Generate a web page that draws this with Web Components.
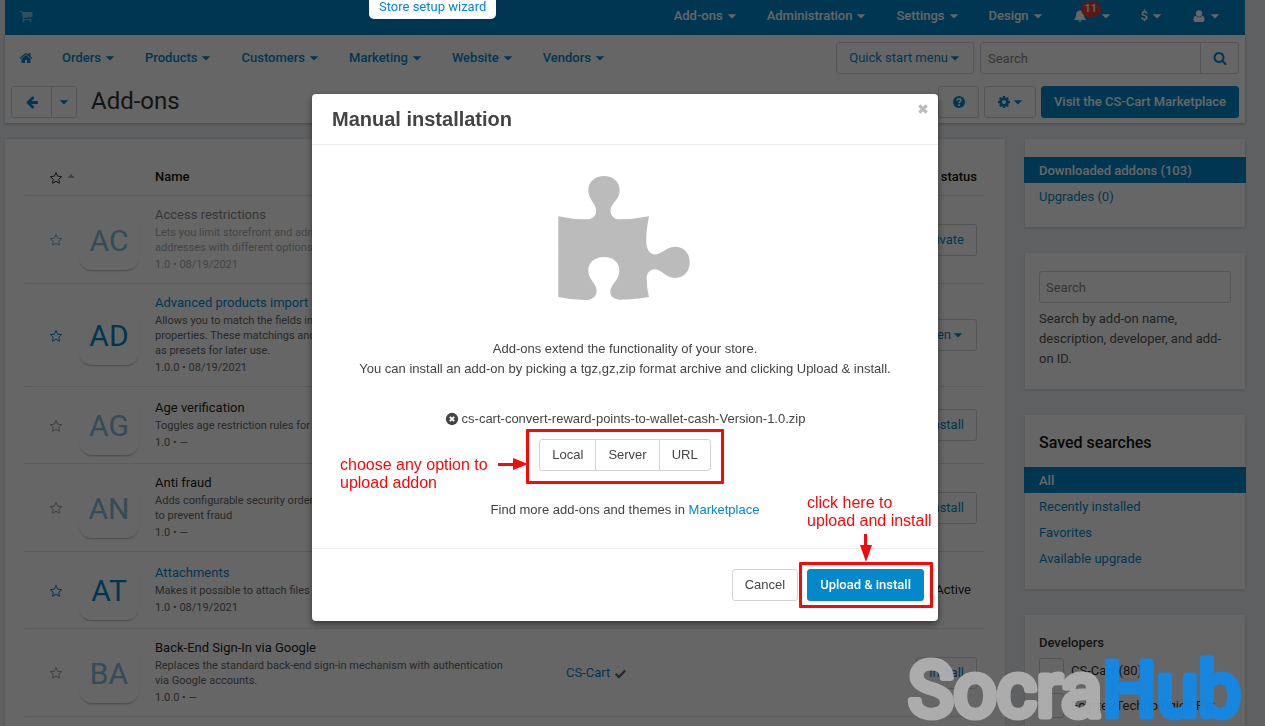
<!DOCTYPE html>
<html lang="en">
<head>
<meta charset="utf-8">
<title>Add-ons</title>
<style>
    :root {
        --primary-color: #0388cc;
        --border-color: #d0d4d6;
        --note-color: #f50a0a;
    }

    body {
        margin: 0;
        height: 100vh;
        overflow: hidden;
        background: #ebf0f3;
        color: #333;
        font: 13px/20px Roboto, sans-serif;
    }
</style>
</head>
<body>
<admin-page></admin-page>
<wizard-tab>Store setup wizard</wizard-tab>
<install-dialog heading="Manual installation"></install-dialog>
<brand-mark></brand-mark>

<script>
/**
 * Small helper: attaches an open shadow root and fills it with a copy of
 * the markup.
 */
function attach(element, html) {
    const template = document.createElement("template");
    template.innerHTML = html;
    element.attachShadow({mode: "open"});
    element.shadowRoot.appendChild(template.content.cloneNode(true));
}

const ICONS = {
    home: '<path d="M1472 992v480q0 26-19 45t-45 19h-384v-384h-256v384h-384q-26 0-45-19t-19-45v-480q0-1 .5-3t.5-3l575-474 575 474q1 2 1 6zm223-69l-62 74q-8 9-21 11h-3q-13 0-21-7l-692-577-692 577q-12 8-24 7-13-2-21-11l-62-74q-8-10-7-23.5t11-21.5l719-599q32-26 76-26t76 26l244 204v-195q0-14 9-23t23-9h192q14 0 23 9t9 23v408l219 182q10 8 11 21.5t-7 23.5z"/>',
    search: '<path d="M1216 832q0-185-131.500-316.500t-316.500-131.500-316.500 131.500-131.500 316.500 131.500 316.500 316.500 131.500 316.500-131.500 131.500-316.500zm512 832q0 52-38 90t-90 38q-54 0-90-38l-343-342q-179 124-399 124-143 0-273.500-55.500t-225-150-150-225-55.500-273.500 55.500-273.500 150-225 225-150 273.500-55.500 273.500 55.500 225 150 150 225 55.500 273.500q0 220-124 399l343 343q37 37 37 90z"/>',
    back: '<path d="M1664 896v128q0 53-32.500 90.500t-84.500 37.500h-704l293 294q38 36 38 90t-38 90l-75 76q-37 37-90 37-52 0-91-37l-651-652q-37-37-37-90 0-52 37-91l651-650q38-38 91-38 52 0 90 38l75 74q38 38 38 91t-38 91l-293 293h704q52 0 84.500 37.500t32.500 90.500z"/>',
    cart: '<path d="M704 1536q0 52-38 90t-90 38-90-38-38-90 38-90 90-38 90 38 38 90zm896 0q0 52-38 90t-90 38-90-38-38-90 38-90 90-38 90 38 38 90zm128-1088v512q0 24-16.500 42.500t-40.500 21.500l-1044 122q13 60 13 70 0 16-24 64h920q26 0 45 19t19 45-19 45-45 19h-1024q-26 0-45-19t-19-45q0-11 8-31.500t16-36 21.500-40 15.500-29.500l-177-823h-204q-26 0-45-19t-19-45 19-45 45-19h256q16 0 28.500 6.500t19.500 15.500 13 24.500 8 26 5.500 29.500 4.500 26h1201q26 0 45 19t19 45z"/>',
    cog: '<path d="M1152 896q0-106-75-181t-181-75-181 75-75 181 75 181 181 75 181-75 75-181zm512-109v222q0 12-8 23t-20 13l-185 28q-19 54-39 91 35 50 107 138 10 12 10 25t-9 23q-27 37-99 108t-94 71q-12 0-26-9l-138-108q-44 23-91 38-16 136-29 186-7 28-36 28h-222q-14 0-24.500-8.500t-11.500-21.500l-28-184q-49-16-90-37l-141 107q-10 9-25 9-14 0-25-11-126-114-165-168-7-10-7-23 0-12 8-23 15-21 51-66.500t54-70.500q-27-50-41-99l-183-27q-13-2-21-12.500t-8-23.500v-222q0-12 8-23t19-13l186-28q14-46 39-92-40-57-107-138-10-12-10-24 0-10 9-23 26-36 98.500-107.500t94.500-71.500q13 0 26 10l138 107q44-23 91-38 16-136 29-186 7-28 36-28h222q14 0 24.500 8.500t11.500 21.500l28 184q49 16 90 37l142-107q9-9 24-9 13 0 25 10 129 119 165 170 7 8 7 22 0 12-8 23-15 21-51 66.500t-54 70.500q26 50 41 98l183 28q13 2 21 12.500t8 23.500z"/>',
    bell: '<path d="M896 128q90 0 100 110 400 90 400 520 0 370 268 560 0 90-110 90H240q-112 0-112-90 268-190 268-560 0-430 400-520 10-110 100-110zM700 1460h392q-20 200-196 200t-196-200z"/>',
    user: '<circle cx="896" cy="560" r="400"/><path d="M480 850q180 200 416 200t416-200q300 60 300 560 0 254-250 254H430q-250 0-250-254 0-500 300-560z"/>',
    help: '<circle cx="896" cy="896" r="768"/><path d="M640 720q20-240 266-240 236 0 236 206 0 110-120 180-110 60-110 160v30" fill="none" stroke="#fff" stroke-width="200"/><path d="M800 1190h220v210H800z" fill="#fff"/>',
    remove: '<circle cx="896" cy="896" r="790"/><path d="M620 620l552 552M1172 620l-552 552" stroke="#fff" stroke-width="250"/>',
    times: '<path d="M420 420l952 952M1372 420l-952 952" stroke="currentColor" stroke-width="400"/>',
    check: '<path d="M240 960l430 420 880-900" fill="none" stroke="currentColor" stroke-width="330"/>',
    star: '<path d="M896 190l215 470 510 60-380 345 105 505-450-255-450 255 105-505-380-345 510-60z" fill="none" stroke="currentColor" stroke-width="125" stroke-linejoin="round"/>',
    down: '<path d="M256 640h1280l-640 640z"/>',
    up: '<path d="M256 1216h1280l-640-640z"/>'
};

/** <ui-icon name="home"> takes its size from the font size. */
class UiIcon extends HTMLElement {
    constructor() {
        super();
        attach(this, `
            <style>
                :host { display: inline-flex; font-size: 14px; }
                svg { width: 1em; height: 1em; fill: currentColor; }
            </style>
            <svg viewBox="0 0 1792 1792" aria-hidden="true">${ICONS[this.getAttribute("name")]}</svg>
        `);
    }
}

/** A menu title with a caret. */
class NavItem extends HTMLElement {
    constructor() {
        super();
        attach(this, `
            <style>
                :host { display: block; font-weight: 500; }
                a { display: flex; align-items: center; gap: 3px; color: inherit; text-decoration: none; }
                .caret { font-size: 12px; }
            </style>
            <a href="#"><slot></slot><ui-icon class="caret" name="down"></ui-icon></a>
        `);
    }
}

/** Bordered button, "primary" and "dark" change its colours. */
class UiButton extends HTMLElement {
    constructor() {
        super();
        attach(this, `
            <style>
                :host { display: inline-flex; }
                button {
                    box-sizing: border-box;
                    display: flex;
                    align-items: center;
                    justify-content: center;
                    gap: 1px;
                    width: 100%;
                    height: 32px;
                    padding: 0 12px;
                    border: 1px solid var(--border-color);
                    border-radius: 3px;
                    background: #fff;
                    color: var(--primary-color);
                    font: inherit;
                    white-space: nowrap;
                }
                :host([dark]) button { color: #444; }
                :host([primary]) button {
                    border-color: var(--primary-color);
                    background: var(--primary-color);
                    color: #fff;
                    font-family: Roboto, sans-serif;
                    font-weight: 500;
                }
                :host([joined]) button { border-radius: 0; }
                :host([joined="first"]) button { border-radius: 3px 0 0 3px; }
                :host([joined="last"]) button { border-radius: 0 3px 3px 0; }
            </style>
            <button type="button"><slot></slot></button>
        `);
    }
}

class TopBar extends HTMLElement {
    constructor() {
        super();
        attach(this, `
            <style>
                :host {
                    display: flex;
                    align-items: center;
                    justify-content: space-between;
                    height: 35px;
                    padding: 0 24px 4px 14px;
                    box-sizing: border-box;
                    background: var(--primary-color);
                    color: #fff;
                }
                nav { display: flex; align-items: center; gap: 29px; }
                .cart { opacity: .5; }
                .bell { position: relative; display: flex; margin-right: 10px; }
                .badge {
                    position: absolute;
                    left: 8px;
                    top: -8px;
                    padding: 0 4px;
                    border-radius: 8px;
                    background: #e0403c;
                    font-size: 11px;
                    line-height: 16px;
                }
            </style>
            <ui-icon class="cart" name="cart"></ui-icon>
            <nav>
                <nav-item>Add-ons</nav-item>
                <nav-item>Administration</nav-item>
                <nav-item>Settings</nav-item>
                <nav-item>Design</nav-item>
                <nav-item><span class="bell"><ui-icon name="bell"></ui-icon><span class="badge">11</span></span></nav-item>
                <nav-item>$</nav-item>
                <nav-item><ui-icon name="user"></ui-icon></nav-item>
            </nav>
        `);
    }
}

class MainMenu extends HTMLElement {
    constructor() {
        super();
        attach(this, `
            <style>
                :host {
                    display: grid;
                    gap: 12px;
                    padding: 7px 6px 5px;
                    background: #fff;
                    box-shadow: 0 1px 3px rgba(0, 0, 0, .25);
                }
                .row, nav, .left, .right, .search { display: flex; align-items: center; }
                .row { justify-content: space-between; height: 32px; }
                nav { gap: 29px; padding-left: 8px; color: var(--primary-color); }
                .home { display: flex; color: inherit; }
                .right { gap: 6px; }
                .tools { gap: 5px; }
                .left { align-items: flex-start; }
                h1 { margin: 0 0 0 14px; font-size: 24px; font-weight: 400; line-height: 30px; }
                .back { width: 41px; }
                .back-menu { width: 26px; margin-left: -1px; }
                .back-menu ui-icon, .caret { font-size: 12px; }
                .search input {
                    box-sizing: border-box;
                    width: 221px;
                    height: 32px;
                    padding: 0 7px;
                    border: 1px solid var(--border-color);
                    border-radius: 3px 0 0 3px;
                    font: inherit;
                }
                .search ui-button { width: 39px; margin-left: -1px; }
                input::placeholder { color: #888; }
                .visit { width: 198px; }
                .help { width: 41px; }
                .gear { width: 52px; }
            </style>
            <div class="row">
                <nav>
                    <a class="home" href="#" aria-label="Home"><ui-icon name="home"></ui-icon></a>
                    <nav-item>Orders</nav-item>
                    <nav-item>Products</nav-item>
                    <nav-item>Customers</nav-item>
                    <nav-item>Marketing</nav-item>
                    <nav-item>Website</nav-item>
                    <nav-item>Vendors</nav-item>
                </nav>
                <div class="right">
                    <ui-button>Quick start menu<ui-icon class="caret" name="down"></ui-icon></ui-button>
                    <div class="search">
                        <input type="text" placeholder="Search" aria-label="Search">
                        <ui-button joined="last"><ui-icon name="search"></ui-icon></ui-button>
                    </div>
                </div>
            </div>
            <div class="row">
                <div class="left">
                    <ui-button class="back" joined="first"><ui-icon name="back"></ui-icon></ui-button>
                    <ui-button class="back-menu" joined="last"><ui-icon name="down"></ui-icon></ui-button>
                    <h1>Add-ons</h1>
                </div>
                <div class="right tools">
                    <ui-button class="help"><ui-icon name="help"></ui-icon></ui-button>
                    <ui-button class="gear"><ui-icon name="cog"></ui-icon><ui-icon class="caret" name="down"></ui-icon></ui-button>
                    <ui-button class="visit" primary>Visit the CS-Cart Marketplace</ui-button>
                </div>
            </div>
        `);
    }
}

const ADDONS = [
    {code: "AC", name: "Access restrictions", text: "Lets you limit storefront and admin area access to\naddresses with different options", meta: "1.0 • 08/19/2021", state: "disabled", action: "Activate"},
    {code: "AD", name: "Advanced products import", text: "Allows you to match the fields in the file with product\nproperties. These matchings and settings can be saved\nas presets for later use.", meta: "1.0.0 • 08/19/2021", state: "active", action: "Open", menu: true},
    {code: "AG", name: "Age verification", text: "Toggles age restriction rules for products", meta: "1.0 • —", state: "new", action: "Install"},
    {code: "AN", name: "Anti fraud", text: "Adds configurable security order checks\nto prevent fraud", meta: "1.0 • —", state: "new", action: "Install"},
    {code: "AT", name: "Attachments", text: "Makes it possible to attach files to products", meta: "1.0 • 08/19/2021", state: "active", status: "Active"},
    {code: "BA", name: "Back-End Sign-In via Google", text: "Replaces the standard back-end sign-in mechanism with authentication\nvia Google accounts.", meta: "1.0.0 • —", state: "new", action: "Install", vendor: "CS-Cart"}
];

class AddonTable extends HTMLElement {
    constructor() {
        super();
        attach(this, `
            <style>
                :host {
                    display: block;
                    padding: 20px 20px 40px;
                    background: #fff;
                    box-shadow: 0 0 2px rgba(0, 0, 0, .15);
                }
                table { width: 100%; border-collapse: collapse; table-layout: fixed; }
                th { height: 36px; padding: 0; font-weight: 500; font-size: 13px; text-align: left; color: #111; border-bottom: 1px solid #e3e5e6; }
                td { padding: 8px 0; border-bottom: 1px solid #e3e5e6; vertical-align: middle; }
                th:first-child, td:first-child { padding-left: 24px; }
                th:last-child, td:last-child { padding-right: 8px; text-align: right; }
                .mark { width: 54px; }
                .logo { width: 76px; }
                .name { width: 411px; }
                .last { width: 120px; }
                .sort { font-size: 10px; color: #999; }
                .tile {
                    width: 60px;
                    height: 60px;
                    border-radius: 13px;
                    box-shadow: 0 2px 2px -1px rgba(0, 0, 0, .3);
                    color: var(--primary-color);
                    font-size: 30px;
                    line-height: 62px;
                    text-align: center;
                }
                .info { padding-top: 1px; }
                .title { color: #222; }
                .text { font-size: 11px; line-height: 15px; white-space: pre-line; color: #666; }
                .meta { font-size: 11px; line-height: 20px; color: #666; }
                ui-icon[name="star"] { color: #999; vertical-align: middle; }
                th ui-icon[name="star"] { color: #333; }
                .active .title, .active ui-icon[name="star"], .vendor { color: var(--primary-color); }
                .disabled .info { opacity: .55; }
                .disabled .tile, .new .tile { color: #82bddc; }
                .disabled ui-icon[name="star"] { color: #82a8c0; }
                .vendor ui-icon { color: #666; font-size: 13px; vertical-align: middle; }
                .caret { font-size: 12px; }
                .status { color: #222; padding-right: 6px; }
            </style>
            <table>
                <colgroup><col class="mark"><col class="logo"><col class="name"><col><col class="last"></colgroup>
                <thead>
                    <tr><th><ui-icon name="star"></ui-icon> <ui-icon class="sort" name="up"></ui-icon></th><th></th><th>Name</th><th></th><th>Install status</th></tr>
                </thead>
                <tbody>${ADDONS.map(this.row).join("")}</tbody>
            </table>
        `);
    }

    row(addon) {
        const caret = addon.menu ? '<ui-icon class="caret" name="down"></ui-icon>' : "";
        const vendor = addon.vendor
            ? `<span class="vendor">${addon.vendor} <ui-icon name="check"></ui-icon></span>`
            : "";
        const status = addon.action
            ? `<ui-button>${addon.action}${caret}</ui-button>`
            : `<span class="status">${addon.status}</span>`;
        return `
            <tr class="${addon.state}">
                <td><ui-icon name="star"></ui-icon></td>
                <td><div class="tile">${addon.code}</div></td>
                <td><div class="info"><div class="title">${addon.name}</div><div class="text">${addon.text}</div><div class="meta">${addon.meta}</div></div></td>
                <td>${vendor}</td>
                <td>${status}</td>
            </tr>`;
    }
}

/** White box of the right column. */
class SideCard extends HTMLElement {
    constructor() {
        super();
        attach(this, `
            <style>
                :host {
                    display: block;
                    padding: 18px 0;
                    background: #fff;
                    box-shadow: 0 1px 3px rgba(0, 0, 0, .15);
                }
            </style>
            <slot></slot>
        `);
    }
}

class SideLink extends HTMLElement {
    constructor() {
        super();
        attach(this, `
            <style>
                :host { display: block; margin: 0 -1px; }
                a { display: block; padding: 4px 15px 2px; color: var(--primary-color); text-decoration: none; }
                :host([active]) a { background: var(--primary-color); color: #fff; font-weight: 500; }
            </style>
            <a href="#"><slot></slot></a>
        `);
    }
}

class SideBar extends HTMLElement {
    constructor() {
        super();
        attach(this, `
            <style>
                :host { display: grid; gap: 26px; align-content: start; }
                .pad { padding: 0 14px; }
                input[type="text"] {
                    box-sizing: border-box;
                    width: 100%;
                    height: 32px;
                    padding: 0 6px;
                    border: 1px solid var(--border-color);
                    border-radius: 3px;
                    font: inherit;
                }
                input::placeholder { color: #888; }
                .hint { display: block; margin: 6px 0 2px; color: #555; }
                h2 { margin: 0 0 14px; font-size: 16px; font-weight: 500; line-height: 20px; color: #111; }
                h3 { margin: 0; font-size: 13px; font-weight: 500; line-height: 20px; }
                .option { display: flex; gap: 7px; height: 35px; align-items: center; white-space: nowrap; }
                input[type="checkbox"] {
                    appearance: none;
                    flex: none;
                    width: 25px;
                    height: 25px;
                    margin: 0;
                    border: 1px solid var(--border-color);
                    border-radius: 3px;
                }
            </style>
            <side-card>
                <side-link active>Downloaded addons (103)</side-link>
                <side-link>Upgrades (0)</side-link>
            </side-card>
            <side-card>
                <div class="pad">
                    <input type="text" id="find" placeholder="Search">
                    <label class="hint" for="find">Search by add-on name, description, developer, and add-on ID.</label>
                </div>
            </side-card>
            <side-card>
                <h2 class="pad">Saved searches</h2>
                <side-link active>All</side-link>
                <side-link>Recently installed</side-link>
                <side-link>Favorites</side-link>
                <side-link>Available upgrade</side-link>
            </side-card>
            <side-card>
                <div class="pad">
                    <h3>Developers</h3>
                    <label class="option"><input type="checkbox"> CS-Cart (80)</label>
                    <label class="option"><input type="checkbox"> Ecarter Technologies Pvt</label>
                </div>
            </side-card>
        `);
    }
}

class AdminPage extends HTMLElement {
    constructor() {
        super();
        attach(this, `
            <style>
                :host { display: block; padding: 0 20px 0 5px; }
                main { display: grid; grid-template-columns: minmax(0, 1fr) 220px; gap: 20px; margin-top: 16px; }
            </style>
            <top-bar></top-bar>
            <main-menu></main-menu>
            <main>
                <addon-table></addon-table>
                <side-bar></side-bar>
            </main>
        `);
    }
}

class WizardTab extends HTMLElement {
    constructor() {
        super();
        attach(this, `
            <style>
                :host { position: absolute; z-index: 2; top: 0; left: 369px; }
                a {
                    display: block;
                    padding: 0 10px 5px;
                    border-radius: 0 0 5px 5px;
                    background: #fff;
                    color: var(--primary-color);
                    line-height: 14px;
                    text-decoration: none;
                }
            </style>
            <a href="#"><slot></slot></a>
        `);
    }
}

/** Red frame drawn over a part of the dialog. */
class RedFrame extends HTMLElement {
    constructor() {
        super();
        attach(this, `
            <style>
                :host {
                    position: absolute;
                    box-sizing: border-box;
                    border: 3px solid var(--note-color);
                    border-radius: 1px;
                    pointer-events: none;
                }
            </style>
        `);
    }
}

/** Red remark written beside a frame. */
class RedNote extends HTMLElement {
    constructor() {
        super();
        attach(this, `
            <style>
                :host {
                    position: absolute;
                    color: var(--note-color);
                    font: 16px/18px "Liberation Sans", Arial, sans-serif;
                    white-space: nowrap;
                }
            </style>
            <slot></slot>
        `);
    }
}

class InstallDialog extends HTMLElement {
    constructor() {
        super();
        attach(this, `
            <style>
                :host {
                    position: fixed;
                    inset: 0;
                    z-index: 1;
                    display: flex;
                    align-items: flex-start;
                    justify-content: center;
                    padding: 94px 20px 0 5px;
                    background: rgba(0, 0, 0, .6);
                    color: #444;
                    font-family: "Liberation Sans", Arial, sans-serif;
                }
                section {
                    position: relative;
                    width: 626px;
                    border-radius: 4px;
                    background: #fff;
                    box-shadow: 0 3px 7px rgba(0, 0, 0, .5);
                }
                header { display: flex; justify-content: space-between; padding: 8px 8px 12px 20px; border-bottom: 1px solid #eee; }
                h2 { margin: 0; font-size: 20px; line-height: 34px; height: 30px; }
                .close { align-self: flex-start; display: flex; margin: 0; padding: 0; border: 0; background: none; color: #bbb; }
                .body { display: flex; flex-direction: column; align-items: center; padding: 31px 0 28px; text-align: center; }
                .puzzle { width: 134px; height: 126px; fill: #bbb; }
                p { margin: 0; }
                .intro { margin-top: 37px; }
                .file { display: flex; align-items: center; gap: 3px; margin-top: 30px; }
                .sources { display: flex; margin: 10px 0 29px; }
                .sources ui-button + ui-button { margin-left: -1px; }
                a { color: var(--primary-color); text-decoration: none; }
                footer { display: flex; justify-content: flex-end; gap: 9px; padding: 20px 14px; border-top: 1px solid #eee; }
                .arrow { position: absolute; fill: var(--note-color); }
                .sources-note { left: 28px; top: 362px; }
                .sources-arrow { left: 185px; top: 364px; }
                .sources-frame { left: 214px; top: 335px; width: 198px; height: 55px; }
                .install-note { left: 495px; top: 400px; }
                .install-arrow { left: 547px; top: 439px; }
                .install-frame { left: 487px; top: 468px; width: 134px; height: 46px; }
            </style>
            <section role="dialog" aria-label="${this.getAttribute("heading")}">
                <header>
                    <h2>${this.getAttribute("heading")}</h2>
                    <button class="close" type="button" aria-label="Close"><ui-icon name="times"></ui-icon></button>
                </header>
                <div class="body">
                    <svg class="puzzle" viewBox="116 47 402 378" aria-hidden="true">
                        <path d="M117 168Q160 178 205 177C224 176 236 160 228 140C222 125 207 112 207 90C207 64 227 47 254 47C281 47 301 64 301 90C301 112 286 122 277 138C267 158 280 176 300 177Q345 177 389 168C385 190 380 215 381 250C384 278 402 288 421 279C437 271 447 259 468 259C494 259 511 279 511 306C511 333 494 353 468 353C445 353 434 337 416 329C399 322 382 334 382 353Q382 383 389 410Q340 418 300 418C279 417 268 402 275 384C282 367 300 356 300 330C300 306 281 290 253 290C226 290 207 307 207 330C207 355 223 363 230 381C237 401 224 417 203 419Q160 420 117 410z"/>
                    </svg>
                    <p class="intro">Add-ons extend the functionality of your store.<br>You can install an add-on by picking a tgz,gz,zip format archive and clicking Upload &amp; install.</p>
                    <div class="file"><ui-icon name="remove"></ui-icon><span>cs-cart-convert-reward-points-to-wallet-cash-Version-1.0.zip</span></div>
                    <div class="sources">
                        <ui-button dark joined="first">Local</ui-button>
                        <ui-button dark joined>Server</ui-button>
                        <ui-button dark joined="last">URL</ui-button>
                    </div>
                    <p>Find more add-ons and themes in <a href="#">Marketplace</a></p>
                </div>
                <footer>
                    <ui-button dark>Cancel</ui-button>
                    <ui-button primary>Upload &amp; install</ui-button>
                </footer>

                <red-note class="sources-note">choose any option to<br>upload addon</red-note>
                <svg class="arrow sources-arrow" width="32" height="14"><path d="M1 5h15V0l15 6-15 6V8H1z"/></svg>
                <red-frame class="sources-frame"></red-frame>
                <red-note class="install-note">click here to<br>upload and install</red-note>
                <svg class="arrow install-arrow" width="14" height="30"><path d="M5 1h3v11h5L7 29 1 12h4z"/></svg>
                <red-frame class="install-frame"></red-frame>
            </section>
        `);
    }
}

/** Watermark in the lower right corner, letters thickened by a round stroke. */
class BrandMark extends HTMLElement {
    constructor() {
        super();
        attach(this, `
            <style>
                :host { position: fixed; z-index: 3; right: 18px; bottom: 0; pointer-events: none; }
                svg { display: block; overflow: visible; opacity: .95; }
                text {
                    font: 400 76px Roboto, sans-serif;
                    fill: #b0b0b0;
                    stroke: #b0b0b0;
                    stroke-width: 7px;
                    stroke-linejoin: round;
                }
                .hub { fill: #1488e6; stroke: #1488e6; }
            </style>
            <svg width="344" height="74"><text x="338" y="64" text-anchor="end">Socra<tspan class="hub">Hub</tspan></text></svg>
        `);
    }
}

customElements.define("ui-icon", UiIcon);
customElements.define("nav-item", NavItem);
customElements.define("ui-button", UiButton);
customElements.define("top-bar", TopBar);
customElements.define("main-menu", MainMenu);
customElements.define("addon-table", AddonTable);
customElements.define("side-card", SideCard);
customElements.define("side-link", SideLink);
customElements.define("side-bar", SideBar);
customElements.define("admin-page", AdminPage);
customElements.define("wizard-tab", WizardTab);
customElements.define("red-frame", RedFrame);
customElements.define("red-note", RedNote);
customElements.define("install-dialog", InstallDialog);
customElements.define("brand-mark", BrandMark);
</script>
</body>
</html>
